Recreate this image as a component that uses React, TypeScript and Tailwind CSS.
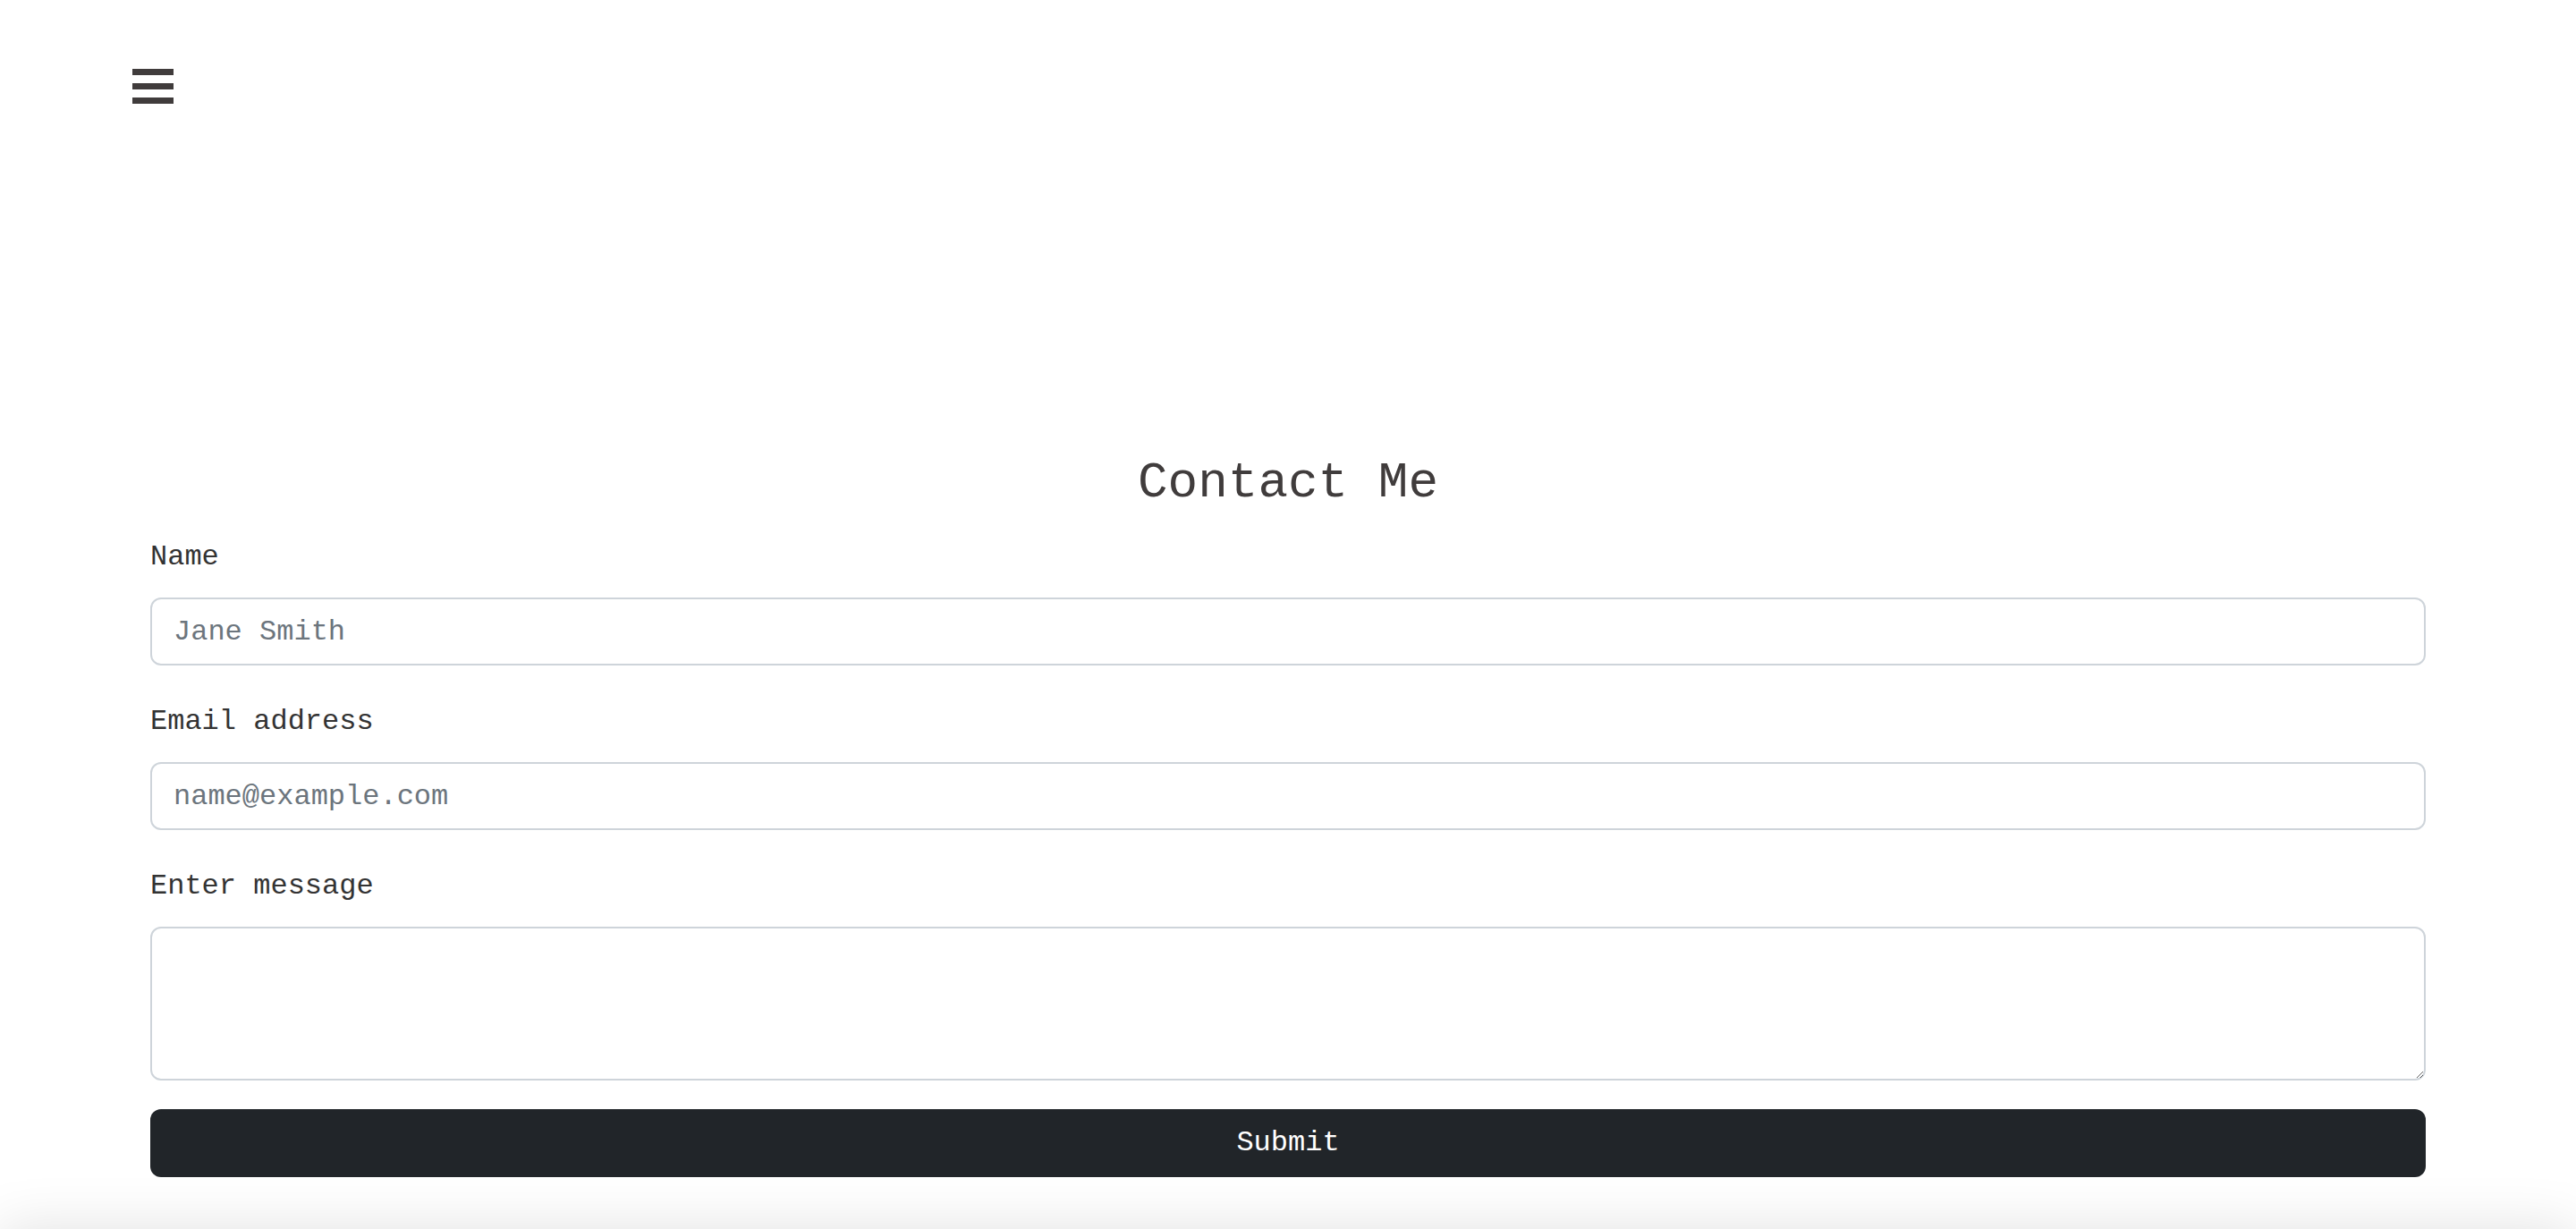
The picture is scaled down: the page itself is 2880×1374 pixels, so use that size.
import React from "react";

export default function App() {
  const font = { fontFamily: '"Liberation Mono", "Courier New", monospace' };
  return (
    <div className="bg-white min-h-screen overflow-hidden" style={font}>
      <header className="pt-[77px] pl-[148px]">
        <button className="flex flex-col gap-[9px] w-[46px]" aria-label="menu">
          <span className="block h-[7px] w-[46px] bg-[#403c3c]" />
          <span className="block h-[7px] w-[46px] bg-[#403c3c]" />
          <span className="block h-[7px] w-[46px] bg-[#403c3c]" />
        </button>
      </header>

      <section className="px-[168px] mt-[391px]">
        <h1 className="text-center text-[56px] leading-[67px] text-[#403c3c] mb-[25px]">Contact Me</h1>
        <form onSubmit={(e) => e.preventDefault()}>
          <div className="mb-[39px]">
            <label className="block text-[32px] leading-[48px] text-[#333333] mb-[21px]">Name</label>
            <input
              type="text"
              placeholder="Jane Smith"
              className="block w-full h-[76px] border-2 border-[#ced4da] rounded-[12px] px-[24px] text-[32px] text-[#212529] placeholder:text-[#6c757d] outline-none"
              style={font}
            />
          </div>
          <div className="mb-[39px]">
            <label className="block text-[32px] leading-[48px] text-[#333333] mb-[21px]">Email address</label>
            <input
              type="email"
              placeholder="name@example.com"
              className="block w-full h-[76px] border-2 border-[#ced4da] rounded-[12px] px-[24px] text-[32px] text-[#212529] placeholder:text-[#6c757d] outline-none"
              style={font}
            />
          </div>
          <div className="mb-[32px]">
            <label className="block text-[32px] leading-[48px] text-[#333333] mb-[21px]">Enter message</label>
            <textarea
              className="block w-full h-[172px] border-2 border-[#ced4da] rounded-[12px] px-[24px] py-[12px] text-[32px] text-[#212529] outline-none"
              style={font}
            />
          </div>
          <button
            type="submit"
            className="block w-full h-[76px] bg-[#212529] text-white text-[32px] rounded-[12px]"
            style={font}
          >
            Submit
          </button>
        </form>
      </section>

      <div className="mt-[58px] h-[400px] bg-white shadow-[0_0_60px_rgba(0,0,0,0.12)]" />
    </div>
  );
}
